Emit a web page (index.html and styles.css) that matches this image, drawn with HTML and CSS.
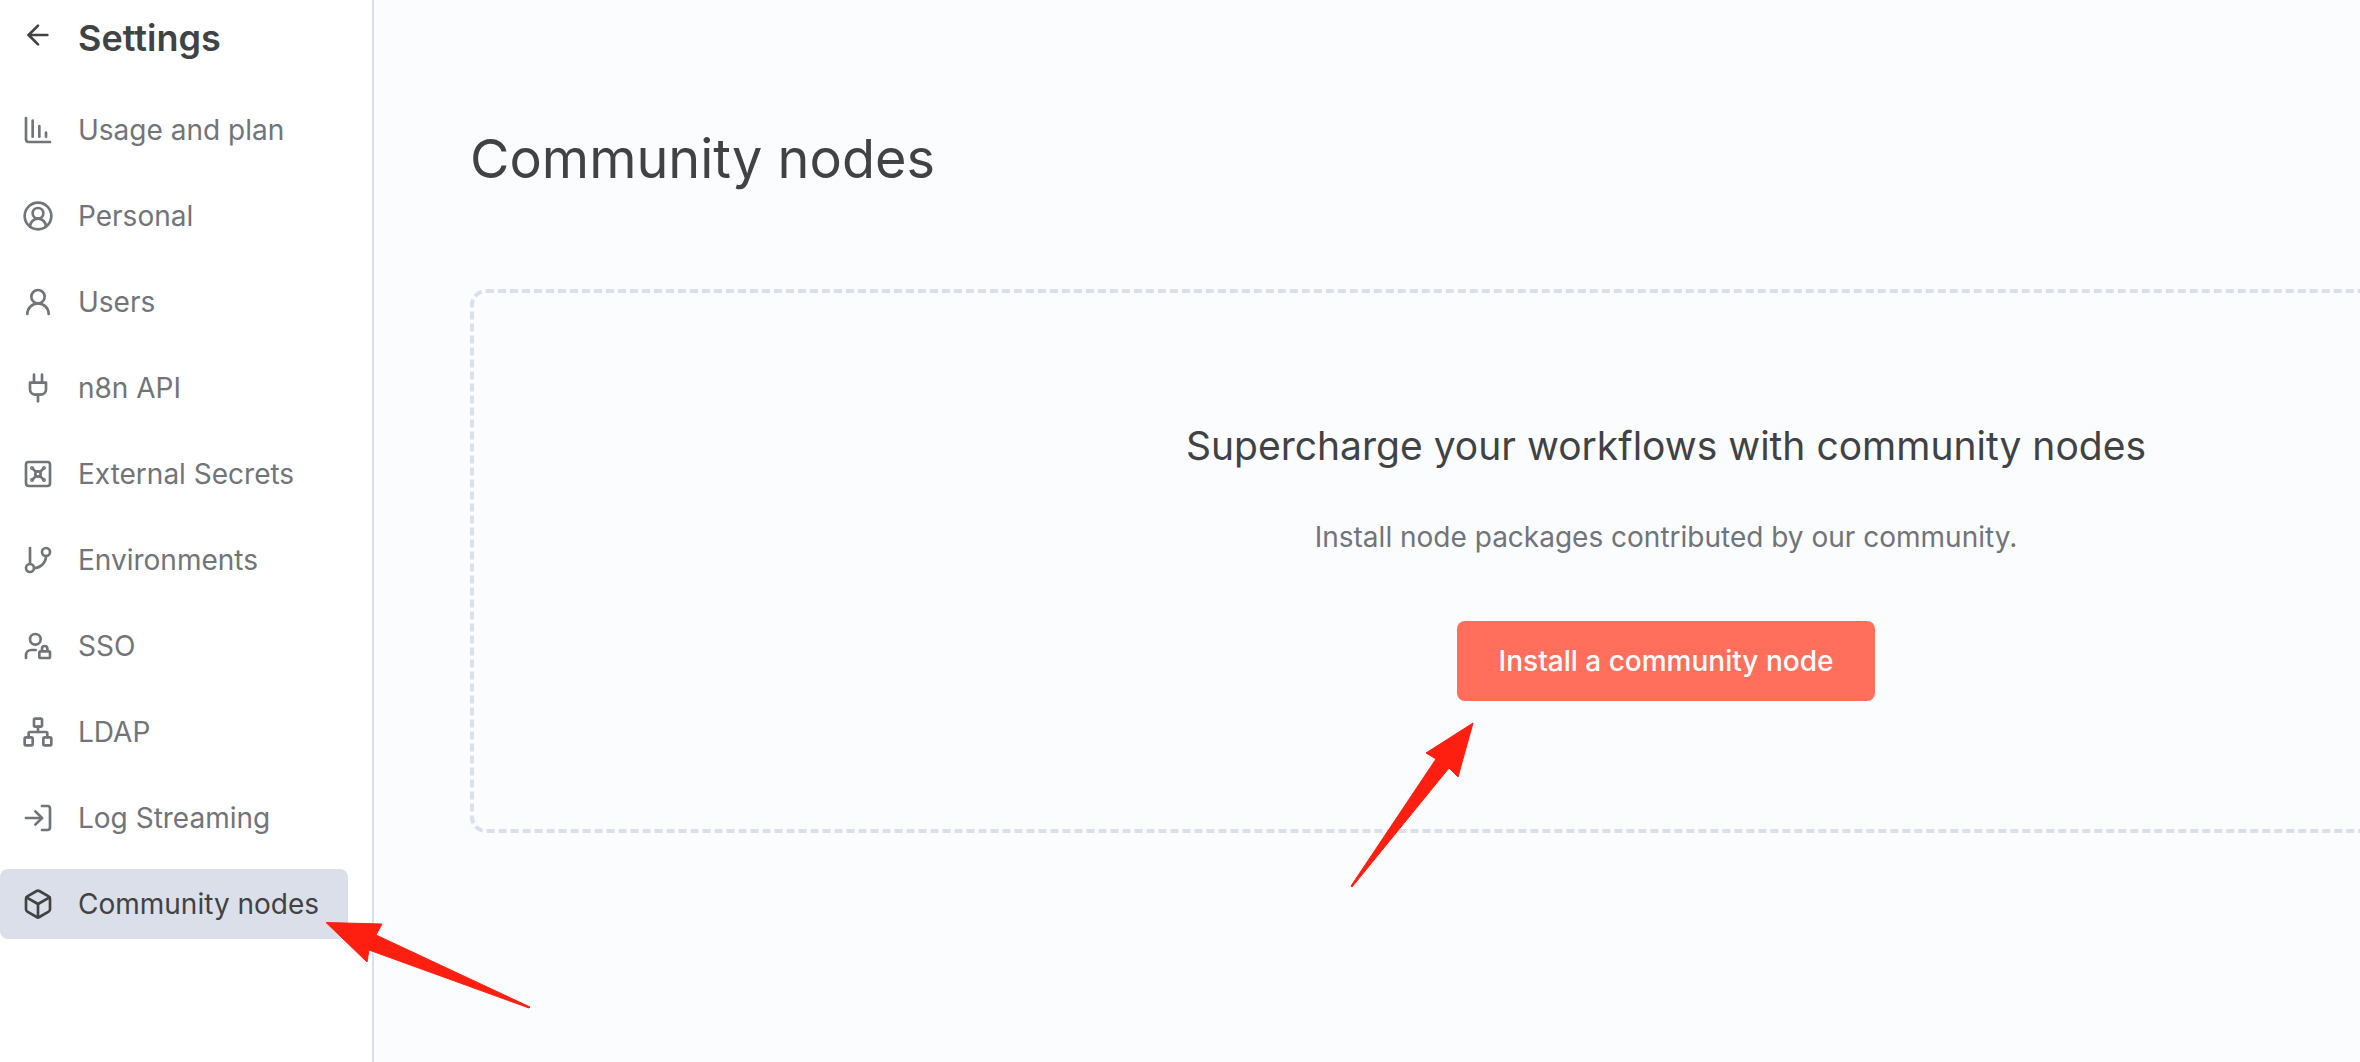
FILE: index.html
```html
<!DOCTYPE html>
<html lang="en">
    <head>
        <meta charset="utf-8">
        <title>Settings - Community nodes</title>
        <meta name="viewport" content="width=device-width, initial-scale=1">
        <link rel="stylesheet" href="styles.css">
    </head>
    <body>
        <div class="app">
            <aside class="sidebar">
                <header class="sidebar-header">
                    <a class="back" href="#" aria-label="Back">
                        <svg class="icon" viewBox="0 0 24 24"><path d="m12 19-7-7 7-7"/><path d="M19 12H5"/></svg>
                    </a>
                    <h2 class="sidebar-title">Settings</h2>
                </header>
                <nav class="menu">
                    <a class="menu-item" href="#">
                        <svg class="icon" viewBox="0 0 24 24"><path d="M13 17V9"/><path d="M18 17v-3"/><path d="M3 3v16a2 2 0 0 0 2 2h16"/><path d="M8 17V5"/></svg>
                        <span>Usage and plan</span>
                    </a>
                    <a class="menu-item" href="#">
                        <svg class="icon" viewBox="0 0 24 24"><path d="M18 20a6 6 0 0 0-12 0"/><circle cx="12" cy="10" r="4"/><circle cx="12" cy="12" r="10"/></svg>
                        <span>Personal</span>
                    </a>
                    <a class="menu-item" href="#">
                        <svg class="icon" viewBox="0 0 24 24"><circle cx="12" cy="8" r="5"/><path d="M20 21a8 8 0 0 0-16 0"/></svg>
                        <span>Users</span>
                    </a>
                    <a class="menu-item" href="#">
                        <svg class="icon" viewBox="0 0 24 24"><path d="M12 22v-5"/><path d="M9 8V2"/><path d="M15 8V2"/><path d="M18 8v5a4 4 0 0 1-4 4h-4a4 4 0 0 1-4-4V8Z"/></svg>
                        <span>n8n API</span>
                    </a>
                    <a class="menu-item" href="#">
                        <svg class="icon" viewBox="0 0 24 24"><rect width="18" height="18" x="3" y="3" rx="2"/><circle cx="7.5" cy="7.5" r=".5"/><path d="m7.9 7.9 2.7 2.7"/><circle cx="16.5" cy="7.5" r=".5"/><path d="m13.4 10.6 2.7-2.7"/><circle cx="7.5" cy="16.5" r=".5"/><path d="m7.9 16.1 2.7-2.7"/><circle cx="16.5" cy="16.5" r=".5"/><path d="m13.4 13.4 2.7 2.7"/><circle cx="12" cy="12" r="2"/></svg>
                        <span>External Secrets</span>
                    </a>
                    <a class="menu-item" href="#">
                        <svg class="icon" viewBox="0 0 24 24"><path d="M6 3v12"/><circle cx="18" cy="6" r="3"/><circle cx="6" cy="18" r="3"/><path d="M18 9a9 9 0 0 1-9 9"/></svg>
                        <span>Environments</span>
                    </a>
                    <a class="menu-item" href="#">
                        <svg class="icon" viewBox="0 0 24 24"><circle cx="10" cy="7" r="4"/><path d="M10.3 15H7a4 4 0 0 0-4 4v2"/><path d="M15 15.5V14a2 2 0 0 1 4 0v1.5"/><rect width="8" height="5" x="13" y="16" rx=".9"/></svg>
                        <span>SSO</span>
                    </a>
                    <a class="menu-item" href="#">
                        <svg class="icon" viewBox="0 0 24 24"><rect x="16" y="16" width="6" height="6" rx="1"/><rect x="2" y="16" width="6" height="6" rx="1"/><rect x="9" y="2" width="6" height="6" rx="1"/><path d="M5 16v-3a1 1 0 0 1 1-1h12a1 1 0 0 1 1 1v3"/><path d="M12 12V8"/></svg>
                        <span>LDAP</span>
                    </a>
                    <a class="menu-item" href="#">
                        <svg class="icon" viewBox="0 0 24 24"><path d="m10 17 5-5-5-5"/><path d="M15 12H3"/><path d="M15 3h4a2 2 0 0 1 2 2v14a2 2 0 0 1-2 2h-4"/></svg>
                        <span>Log Streaming</span>
                    </a>
                    <a class="menu-item active" href="#" aria-current="page">
                        <svg class="icon" viewBox="0 0 24 24"><path d="M21 8a2 2 0 0 0-1-1.73l-7-4a2 2 0 0 0-2 0l-7 4A2 2 0 0 0 3 8v8a2 2 0 0 0 1 1.73l7 4a2 2 0 0 0 2 0l7-4A2 2 0 0 0 21 16Z"/><path d="m3.3 7 8.7 5 8.7-5"/><path d="M12 22V12"/></svg>
                        <span>Community nodes</span>
                        <svg class="pointer pointer-menu" viewBox="0 0 206 88"><path d="M0 .5 56 2 50 13 204 85 203 86 43 28 41 40Z"/></svg>
                    </a>
                </nav>
            </aside>
            <main class="content">
                <h1>Community nodes</h1>
                <section class="action-box">
                    <h3>Supercharge your workflows with community nodes</h3>
                    <p>Install node packages contributed by our community.</p>
                    <div class="action">
                        <button class="install" type="button">Install a community node</button>
                        <svg class="pointer pointer-install" viewBox="0 0 124 166"><path d="M123 1 76 31 86 37 1 164 2 165 99 46 108 55Z"/></svg>
                    </div>
                </section>
            </main>
        </div>
    </body>
</html>
```
FILE: styles.css
```css
*{
    box-sizing: border-box;
}
body{
    margin: 0;
    overflow: hidden;
    font-family: Inter, sans-serif;
    font-size: 28px;
    color: #414244;
    background-color: #fbfcfe;
}
h1,h2,h3,p{
    margin: 0;
}
a{
    color: inherit;
    text-decoration: none;
}
.app{
    display: flex;
    min-height: 100vh;
}
.icon{
    width: 32px;
    height: 32px;
    flex-shrink: 0;
    fill: none;
    stroke: currentColor;
    stroke-width: 2;
    stroke-linecap: round;
    stroke-linejoin: round;
}

/* sidebar */
.sidebar{
    width: 374px;
    flex-shrink: 0;
    background-color: white;
    border-right: 2px solid #dbdfe9;
}
.sidebar-header{
    display: flex;
    gap: 24px;
    padding: 16px 22px 0;
    height: 95px;
}
.back{
    display: flex;
    padding-top: 3px;
}
.sidebar-title{
    font-size: 36px;
    font-weight: 600;
    line-height: 44px;
}
.menu{
    display: flex;
    flex-direction: column;
    gap: 16px;
    margin-right: 24px;
}
.menu-item{
    position: relative;
    display: flex;
    align-items: center;
    gap: 24px;
    height: 70px;
    padding-left: 22px;
    color: #717478;
    border-radius: 8px;
    white-space: nowrap;
}
.menu-item.active{
    color: #414244;
    background-color: #dbdfe9;
}

/* content, runs past the right edge of the window */
.content{
    flex: 1;
    min-width: 0;
    margin-right: -502px;
    padding: 124px 0 0 96px;
}
h1{
    font-size: 54px;
    font-weight: 400;
    line-height: 70px;
    margin-bottom: 95px;
}
.action-box{
    display: flex;
    flex-direction: column;
    align-items: center;
    padding: 128px 96px;
    border: 4px dashed #dbdfe9;
    border-radius: 16px;
}
h3{
    font-size: 39px;
    font-weight: 400;
    line-height: 50px;
    margin-bottom: 48px;
}
p{
    line-height: 36px;
    margin-bottom: 66px;
    color: #717478;
}
.action{
    position: relative;
}
.install{
    height: 80px;
    padding: 0 42px;
    border: 0;
    border-radius: 8px;
    background-color: #ff6f5c;
    color: white;
    font-family: inherit;
    font-size: 28px;
    font-weight: 500;
}

/* red arrows drawn over the page */
.pointer{
    position: absolute;
    z-index: 1;
    fill: #ff1f11;
    stroke: #ff1f11;
    stroke-width: 1;
    stroke-linejoin: round;
    overflow: visible;
    pointer-events: none;
}
.pointer-menu{
    left: 326px;
    top: 53px;
    width: 206px;
    height: 88px;
}
.pointer-install{
    left: -107px;
    top: 101px;
    width: 124px;
    height: 166px;
}
```
